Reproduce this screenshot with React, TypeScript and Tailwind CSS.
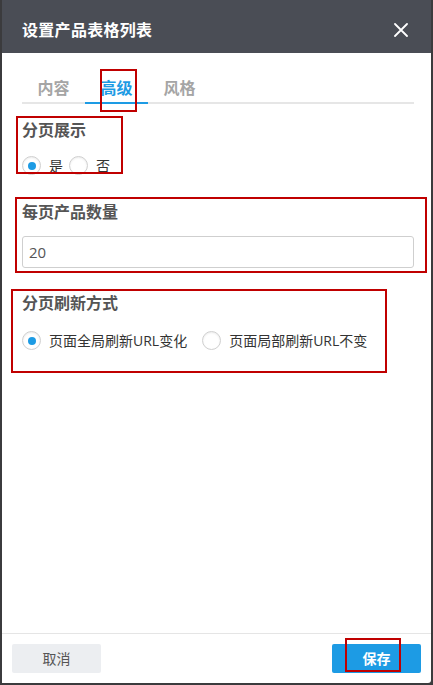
import { useState } from 'react';

const FONT = '"Open Sans", "Noto Sans CJK SC", sans-serif';

type Mark = { left: number; top: number; width: number; height: number };

// annotation boxes drawn on top of the dialog
const MARKS: Mark[] = [
  { left: 100, top: 69, width: 37, height: 43 },
  { left: 16, top: 116, width: 107, height: 58 },
  { left: 15, top: 197, width: 412, height: 76 },
  { left: 11, top: 289, width: 376, height: 84 },
  { left: 345, top: 638, width: 56, height: 34 },
];

const TABS = ['内容', '高级', '风格'];

function Radio({
  label,
  checked,
  onClick,
}: {
  label: string;
  checked: boolean;
  onClick: () => void;
}) {
  return (
    <button type="button" onClick={onClick} className="flex items-center gap-[8px]">
      <span className="flex h-[19px] w-[19px] items-center justify-center rounded-full border border-[#cfcfcf] bg-white shadow-[inset_0_1px_2px_rgba(0,0,0,0.08)]">
        {checked ? <span className="h-[8px] w-[8px] rounded-full bg-[#1d9be4]" /> : null}
      </span>
      <span className="text-[14px] leading-[19px] text-[#333]">{label}</span>
    </button>
  );
}

export default function App() {
  const [tab, setTab] = useState(1);
  const [paged, setPaged] = useState(true);
  const [perPage, setPerPage] = useState('20');
  const [refresh, setRefresh] = useState<'full' | 'part'>('full');

  return (
    <div
      className="relative h-[685px] w-[433px] overflow-hidden bg-[#3b3b3d]"
      style={{ fontFamily: FONT }}
    >
      <div className="ml-[2px] flex h-[683px] w-[429px] flex-col overflow-hidden rounded-br-[3px] bg-white">
        <div className="flex h-[53px] shrink-0 items-center justify-between bg-[#4a4d55] pl-[20px] pr-[20px] pt-[6px]">
          <span className="text-[16px] font-bold tracking-[0.3px] text-white">设置产品表格列表</span>
          <button type="button" className="flex h-[20px] w-[20px] items-center justify-center">
            <svg width="14" height="14" viewBox="0 0 14 14" fill="none">
              <path d="M1 1L13 13M13 1L1 13" stroke="white" strokeWidth="1.8" strokeLinecap="round" />
            </svg>
          </button>
        </div>

        <div className="flex flex-1 flex-col pl-[20px] pr-[17px]">
          <div className="mt-[17px] flex border-b-2 border-[#e6e6e6]">
            {TABS.map((t, i) => (
              <button
                key={t}
                type="button"
                onClick={() => setTab(i)}
                className={
                  i === tab
                    ? '-mb-[2px] w-[63px] border-b-2 border-[#1d9be4] pt-[4px] text-[16px] font-bold leading-[28px] text-[#1d9be4]'
                    : 'w-[63px] pt-[4px] text-[16px] font-bold leading-[28px] text-[#a5a5a5]'
                }
              >
                {t}
              </button>
            ))}
          </div>

          <div className="mt-[14px] text-[16px] font-bold leading-[24px] text-[#555]">分页展示</div>
          <div className="mt-[14px] flex items-center gap-[6px]">
            <Radio label="是" checked={paged} onClick={() => setPaged(true)} />
            <Radio label="否" checked={!paged} onClick={() => setPaged(false)} />
          </div>

          <div className="mt-[25px] text-[16px] font-bold leading-[24px] text-[#555]">每页产品数量</div>
          <input
            value={perPage}
            onChange={(e) => setPerPage(e.target.value)}
            className="mt-[12px] h-[32px] w-full rounded-[3px] border border-[#cfcfcf] px-[6px] text-[15px] text-[#555] outline-none"
          />

          <div className="mt-[23px] text-[16px] font-bold leading-[24px] text-[#555]">分页刷新方式</div>
          <div className="mt-[16px] flex items-center gap-[15px]">
            <Radio label="页面全局刷新URL变化" checked={refresh === 'full'} onClick={() => setRefresh('full')} />
            <Radio label="页面局部刷新URL不变" checked={refresh === 'part'} onClick={() => setRefresh('part')} />
          </div>
        </div>

        <div className="flex shrink-0 items-center justify-between border-t border-[#e5e5e5] px-[10px] py-[10px]">
          <button
            type="button"
            className="h-[29px] w-[89px] rounded-[2px] bg-[#eceef1] text-[14px] text-[#555]"
          >
            取消
          </button>
          <button
            type="button"
            className="h-[29px] w-[89px] rounded-[2px] bg-[#1d9be4] text-[14px] font-bold text-white"
          >
            保存
          </button>
        </div>
      </div>

      {MARKS.map((m, i) => (
        <div
          key={i}
          className="pointer-events-none absolute border-2 border-[#c00000]"
          style={{ left: m.left, top: m.top, width: m.width, height: m.height }}
        />
      ))}
    </div>
  );
}
